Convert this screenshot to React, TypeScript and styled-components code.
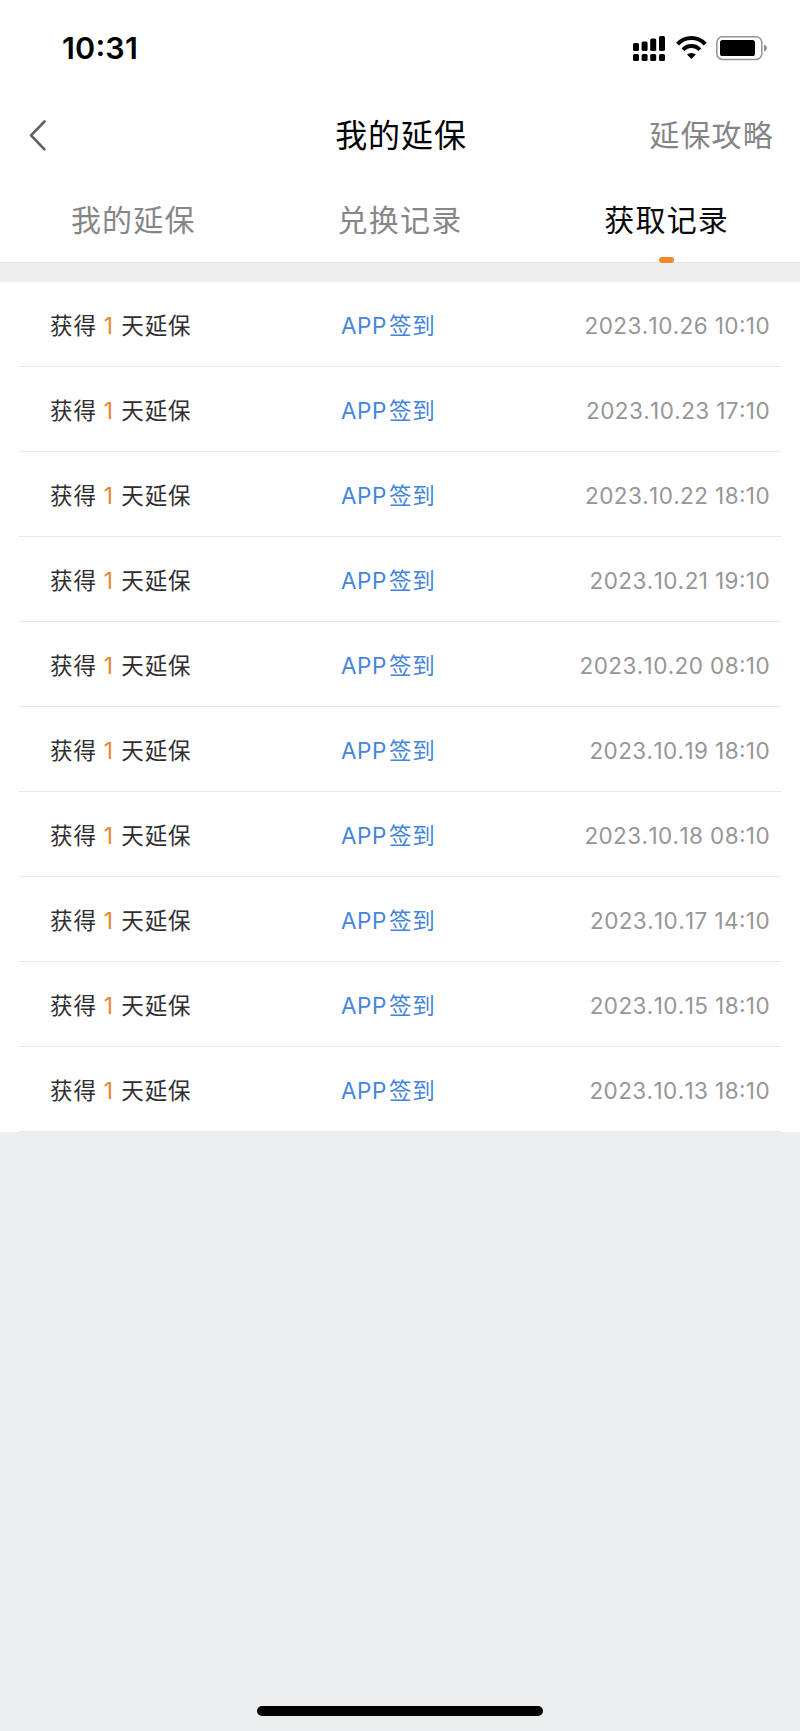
import React from "react";
import styled, { createGlobalStyle } from "styled-components";

const GlobalStyle = createGlobalStyle`
  * { box-sizing: border-box; }
  body { margin: 0; background: #ebeff0; }
`;

const Screen = styled.div`
  display: flex;
  flex-direction: column;
  width: 800px;
  height: 1731px;
  background: #ebeff0;
  font-family: Inter, "Noto Sans CJK SC", sans-serif;
`;

const StatusBar = styled.header`
  display: flex;
  align-items: center;
  justify-content: space-between;
  height: 95px;
  padding: 0 32px 0 62px;
  background: #fff;
`;

const Clock = styled.span`
  font-size: 30.5px;
  font-weight: 600;
  line-height: 40px;
  letter-spacing: 0.2px;
  font-feature-settings: "calt" 1;
  color: #000;
`;

const StatusIcons = styled.svg`
  display: block;
  width: 136px;
  height: 30px;
  margin-top: 3px;
`;

const NavBar = styled.nav`
  display: grid;
  grid-template-columns: 1fr auto 1fr;
  align-items: center;
  height: 80px;
  padding: 0 26px 0 28px;
  background: #fff;
`;

const BackButton = styled.button`
  justify-self: start;
  display: block;
  padding: 0;
  border: 0;
  background: none;
`;

const Title = styled.h1`
  margin: 2px 0 0;
  font-size: 32px;
  font-weight: 400;
  line-height: 46px;
  letter-spacing: 0.9px;
  color: #000;
`;

const GuideLink = styled.span`
  justify-self: end;
  font-size: 30px;
  line-height: 44px;
  letter-spacing: 1.2px;
  color: #858585;
`;

const Tabs = styled.div`
  display: grid;
  grid-template-columns: repeat(3, 1fr);
  height: 88px;
  background: #fff;
  border-bottom: 1px solid #e2e6e7;
`;

const Tab = styled.div<{ $active?: boolean }>`
  position: relative;
  padding-top: 23px;
  text-align: center;
  font-size: 30px;
  line-height: 44px;
  letter-spacing: 1.2px;
  color: ${(p) => (p.$active ? "#0a0a0a" : "#868686")};
`;

const Indicator = styled.i`
  position: absolute;
  left: 50%;
  bottom: -1px;
  width: 15px;
  height: 6px;
  margin-left: -7.5px;
  border-radius: 3px;
  background: #ef882b;
`;

const List = styled.ul`
  margin: 19px 0 0;
  padding: 0 19px;
  list-style: none;
  background: #fff;
`;

const Row = styled.li`
  display: grid;
  grid-template-columns: 291px 1fr auto;
  align-items: center;
  height: 85px;
  padding: 3px 11px 0 31px;
  border-bottom: 1px solid #e5e7e8;
  font-size: 22.5px;
  line-height: 34px;
`;

const Reward = styled.span`
  letter-spacing: 0.9px;
  color: #2e2e2e;
`;

const Days = styled.span`
  margin: 0 0.4px 0 -0.4px;
  color: #e8862d;
`;

const Source = styled.span`
  letter-spacing: 0.9px;
  color: #4385dc;
`;

const AppName = styled.span`
  margin-right: 1.8px;
  letter-spacing: 0.6px;
`;

const Time = styled.time`
  letter-spacing: 0.4px;
  font-kerning: none;
  font-feature-settings: "calt" 1;
  color: #969696;
`;

const Footer = styled.footer`
  display: flex;
  justify-content: center;
  margin-top: auto;
  padding-bottom: 15px;
`;

const HomeBar = styled.div`
  width: 286px;
  height: 10px;
  border-radius: 5px;
  background: #000;
`;

const bars = [
  { x: 1, y: 9, h: 8 },
  { x: 9.6, y: 7.5, h: 9.5 },
  { x: 18.2, y: 4.5, h: 12.5 },
  { x: 27, y: 2, h: 15 },
];

const times = [
  "2023.10.26 10:10",
  "2023.10.23 17:10",
  "2023.10.22 18:10",
  "2023.10.21 19:10",
  "2023.10.20 08:10",
  "2023.10.19 18:10",
  "2023.10.18 08:10",
  "2023.10.17 14:10",
  "2023.10.15 18:10",
  "2023.10.13 18:10",
];

export default function App() {
  return (
    <Screen>
      <GlobalStyle />
      <StatusBar>
        <Clock>10:31</Clock>
        <StatusIcons viewBox="0 0 136 30">
          {bars.map((b) => (
            <React.Fragment key={b.x}>
              <rect x={b.x} y={b.y} width="6" height={b.h} rx="1.6" />
              <rect x={b.x} y="20" width="6" height="7" rx="1.6" />
            </React.Fragment>
          ))}
          <g fill="none" stroke="#000" strokeWidth="4">
            <path d="M45.600 10.200a18.600 18.600 0 0 1 27.600 0" />
            <path d="M51 15.800a11.200 11.200 0 0 1 16.800 0" />
          </g>
          <path d="M59.400 25l-4.400-4.400a6.500 6.500 0 0 1 8.800 0z" />
          <rect x="84.8" y="2.8" width="45" height="22.6" rx="5.6" fill="none" stroke="#929292" strokeWidth="1.5" />
          <rect x="88" y="6" width="35" height="16" rx="2.6" />
          <path d="M132 10.500c1.800.7 3 2 3 3.600s-1.200 2.900-3 3.600z" fill="#929292" />
        </StatusIcons>
      </StatusBar>
      <NavBar>
        <BackButton aria-label="返回">
          <svg width="20" height="34" viewBox="0 0 20 34" display="block">
            <path d="M16.500 3.500L3 17.300l13.500 14" fill="none" stroke="#606060" strokeWidth="2.600" strokeLinecap="round" strokeLinejoin="round" />
          </svg>
        </BackButton>
        <Title>我的延保</Title>
        <GuideLink>延保攻略</GuideLink>
      </NavBar>
      <Tabs>
        <Tab>我的延保</Tab>
        <Tab>兑换记录</Tab>
        <Tab $active>
          获取记录
          <Indicator />
        </Tab>
      </Tabs>
      <List>
        {times.map((t) => (
          <Row key={t}>
            <Reward>
              获得 <Days>1</Days> 天延保
            </Reward>
            <Source>
              <AppName>APP</AppName>签到
            </Source>
            <Time>{t}</Time>
          </Row>
        ))}
      </List>
      <Footer>
        <HomeBar />
      </Footer>
    </Screen>
  );
}
